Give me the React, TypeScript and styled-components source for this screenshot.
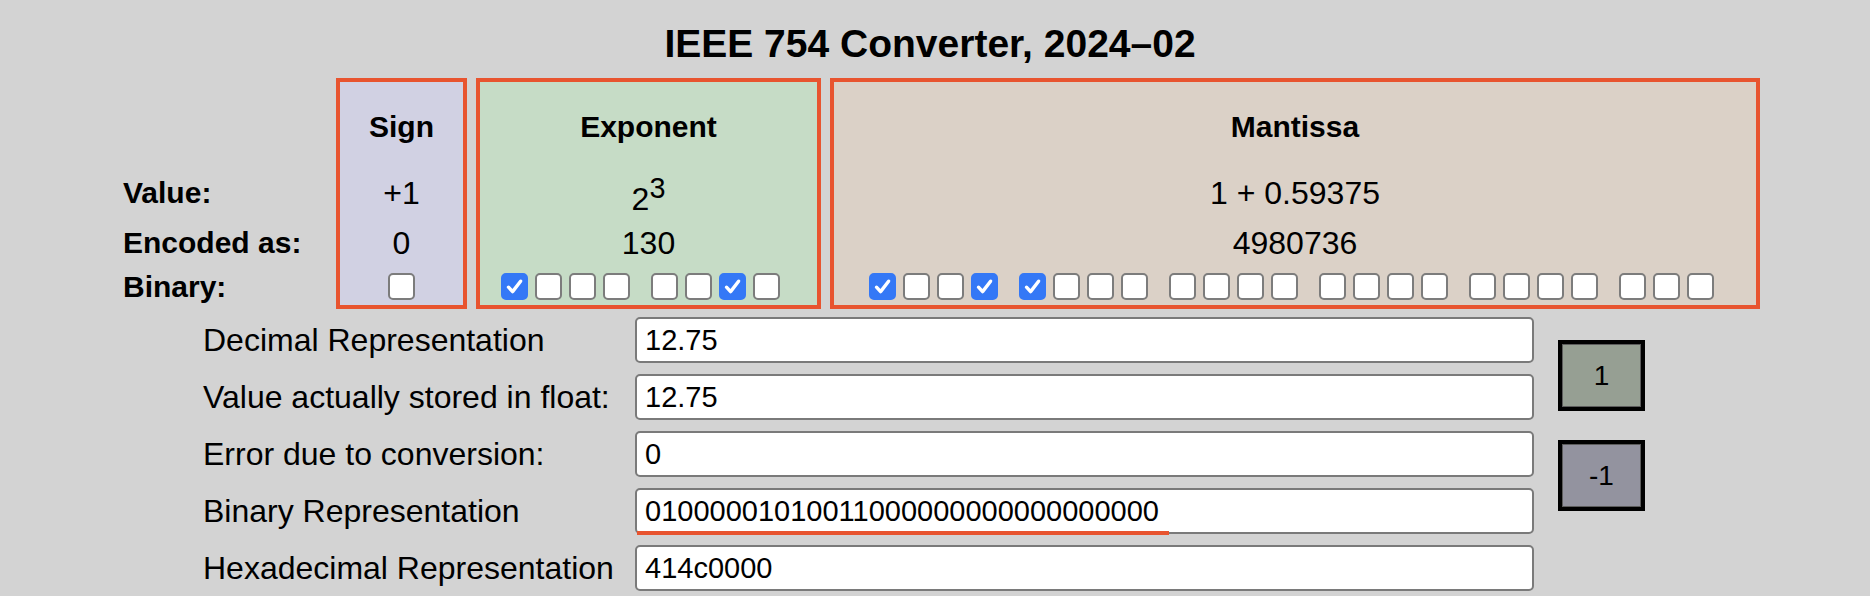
import React from "react";
import styled, { createGlobalStyle } from "styled-components";

const GlobalStyle = createGlobalStyle`
  html, body {
    margin: 0;
    padding: 0;
    background: #d3d3d3;
  }
  body {
    font-family: "Liberation Sans", Arial, Helvetica, sans-serif;
    color: #000;
  }
`;

const ORANGE = "#e8542f";

const toBits = (value: number) => {
  const view = new DataView(new ArrayBuffer(4));
  view.setFloat32(0, value);
  return view.getUint32(0).toString(2).padStart(32, "0");
};

const groupsOf = (bits: string, size: number) => {
  const out: string[] = [];
  for (let i = 0; i < bits.length; i += size) out.push(bits.slice(i, i + size));
  return out;
};

const Check: React.FC = () => (
  <svg width="19" height="19" viewBox="0 0 19 19">
    <path
      d="M3.5 10.2 L7.6 14.6 L15.6 4.2"
      fill="none"
      stroke="#fff"
      strokeWidth="3.4"
      strokeLinecap="round"
      strokeLinejoin="round"
    />
  </svg>
);

const BitRow: React.FC<{ bits: string; pad?: number }> = ({ bits, pad = 0 }) => (
  <Bits $pad={pad}>
    {groupsOf(bits, 4).map((group, g) => (
      <BitGroup key={g}>
        {group.split("").map((b, i) => (
          <Bit key={i} $on={b === "1"}>
            {b === "1" && <Check />}
          </Bit>
        ))}
      </BitGroup>
    ))}
  </Bits>
);

const App: React.FC = () => {
  const decimal = 12.75;
  const bits = toBits(decimal);
  const signBits = bits.slice(0, 1);
  const expBits = bits.slice(1, 9);
  const manBits = bits.slice(9);
  const encodedExp = parseInt(expBits, 2);
  const encodedMan = parseInt(manBits, 2);
  const hex = parseInt(bits, 2).toString(16).padStart(8, "0");

  const rows = [
    { label: "Decimal Representation", value: String(decimal) },
    { label: "Value actually stored in float:", value: String(decimal) },
    { label: "Error due to conversion:", value: "0" },
    { label: "Binary Representation", value: bits, marked: true },
    { label: "Hexadecimal Representation", value: hex },
  ];

  return (
    <Page>
      <GlobalStyle />
      <Title>IEEE 754 Converter, 2024–02</Title>

      <Fields>
        <LabelColumn>
          <Head />
          <Cell $label>Value:</Cell>
          <Cell $label>Encoded as:</Cell>
          <BinaryCell $label>Binary:</BinaryCell>
        </LabelColumn>

        <Box $width={131} $bg="#d1d1e3">
          <Head>Sign</Head>
          <Cell>+1</Cell>
          <Cell>{parseInt(signBits, 2)}</Cell>
          <BinaryCell>
            <BitRow bits={signBits} />
          </BinaryCell>
        </Box>

        <Box $width={345} $bg="#c6dcc6">
          <Head>Exponent</Head>
          <Cell $shift={12}>
            <span>
              2<Sup>{encodedExp - 127}</Sup>
            </span>
          </Cell>
          <Cell>{encodedExp}</Cell>
          <BinaryCell>
            <BitRow bits={expBits} pad={16} />
          </BinaryCell>
        </Box>

        <Box $width={930} $bg="#dbd1c7">
          <Head>Mantissa</Head>
          <Cell>1 + {encodedMan / 2 ** 23}</Cell>
          <Cell>{encodedMan}</Cell>
          <BinaryCell>
            <BitRow bits={manBits} pad={8} />
          </BinaryCell>
        </Box>
      </Fields>

      <Form>
        {rows.map((row, i) => (
          <React.Fragment key={i}>
            <FormLabel>{row.label}</FormLabel>
            <InputWrap>
              <TextInput readOnly value={row.value} />
              {row.marked && <Underline />}
            </InputWrap>
          </React.Fragment>
        ))}
        <Buttons>
          <StepButton $bg="#969f93">1</StepButton>
          <StepButton $bg="#93939f">-1</StepButton>
        </Buttons>
      </Form>
    </Page>
  );
};

const Page = styled.div`
  width: 1870px;
  height: 596px;
  overflow: hidden;
  box-sizing: border-box;
  padding-top: 22px;
`;

const Title = styled.h1`
  margin: 0;
  padding-right: 10px;
  text-align: center;
  font-size: 39px;
  line-height: 44px;
  font-weight: bold;
`;

const Fields = styled.div`
  display: flex;
  gap: 9px;
  margin-top: 12px;
  padding-left: 123px;
`;

const LabelColumn = styled.div`
  display: flex;
  flex-direction: column;
  width: 204px;
  padding: 4px 0;
`;

const Box = styled.div<{ $width: number; $bg: string }>`
  display: flex;
  flex-direction: column;
  box-sizing: border-box;
  width: ${(p) => p.$width}px;
  border: 4px solid ${ORANGE};
  background: ${(p) => p.$bg};
`;

const Head = styled.div`
  display: flex;
  align-items: center;
  justify-content: center;
  box-sizing: border-box;
  height: 86px;
  padding-top: 4px;
  font-size: 30px;
  font-weight: bold;
`;

const Cell = styled.div<{ $label?: boolean; $shift?: number }>`
  display: flex;
  align-items: center;
  justify-content: ${(p) => (p.$label ? "flex-start" : "center")};
  box-sizing: border-box;
  height: 50px;
  line-height: 50px;
  padding-top: ${(p) => p.$shift ?? 0}px;
  font-size: ${(p) => (p.$label ? 30 : 32)}px;
  font-weight: ${(p) => (p.$label ? "bold" : "normal")};
  white-space: nowrap;
`;

const BinaryCell = styled(Cell)`
  height: 37px;
  line-height: 37px;
`;

const Sup = styled.sup`
  font-size: 0.9em;
  line-height: 0;
  vertical-align: super;
`;

const Bits = styled.div<{ $pad: number }>`
  display: flex;
  align-items: center;
  justify-content: center;
  gap: 21px;
  padding-right: ${(p) => p.$pad}px;
`;

const BitGroup = styled.div`
  display: flex;
  gap: 7px;
`;

const Bit = styled.span<{ $on: boolean }>`
  display: flex;
  align-items: center;
  justify-content: center;
  box-sizing: border-box;
  width: 27px;
  height: 27px;
  border-radius: 5px;
  border: 2px solid ${(p) => (p.$on ? "#3478f6" : "#7c7c7c")};
  background: ${(p) => (p.$on ? "#3478f6" : "#fff")};
`;

const Form = styled.div`
  display: grid;
  grid-template-columns: 432px 899px auto;
  row-gap: 11px;
  margin-top: 8px;
  padding-left: 203px;
`;

const FormLabel = styled.div`
  font-size: 32px;
  line-height: 46px;
  white-space: nowrap;
`;

const InputWrap = styled.div`
  position: relative;
`;

const TextInput = styled.input`
  display: block;
  box-sizing: border-box;
  width: 899px;
  height: 46px;
  margin: 0;
  padding: 0 8px;
  border: 2px solid #7a7a7a;
  border-radius: 5px;
  background: #fff;
  font-family: inherit;
  font-size: 29px;
  color: #000;
  outline: none;
`;

const Underline = styled.div`
  position: absolute;
  left: 2px;
  bottom: -1px;
  width: 532px;
  height: 4px;
  background: ${ORANGE};
`;

const Buttons = styled.div`
  grid-column: 3;
  grid-row: 1 / span 5;
  display: flex;
  flex-direction: column;
  align-items: flex-start;
  gap: 29px;
  padding-top: 23px;
  margin-left: 24px;
`;

const StepButton = styled.button<{ $bg: string }>`
  box-sizing: border-box;
  width: 87px;
  height: 71px;
  margin: 0;
  padding: 0;
  border: 4px solid #000;
  box-shadow: inset 0 0 0 1px #5c5c5c;
  background: ${(p) => p.$bg};
  font-family: inherit;
  font-size: 28px;
  color: #000;
`;

export default App;
